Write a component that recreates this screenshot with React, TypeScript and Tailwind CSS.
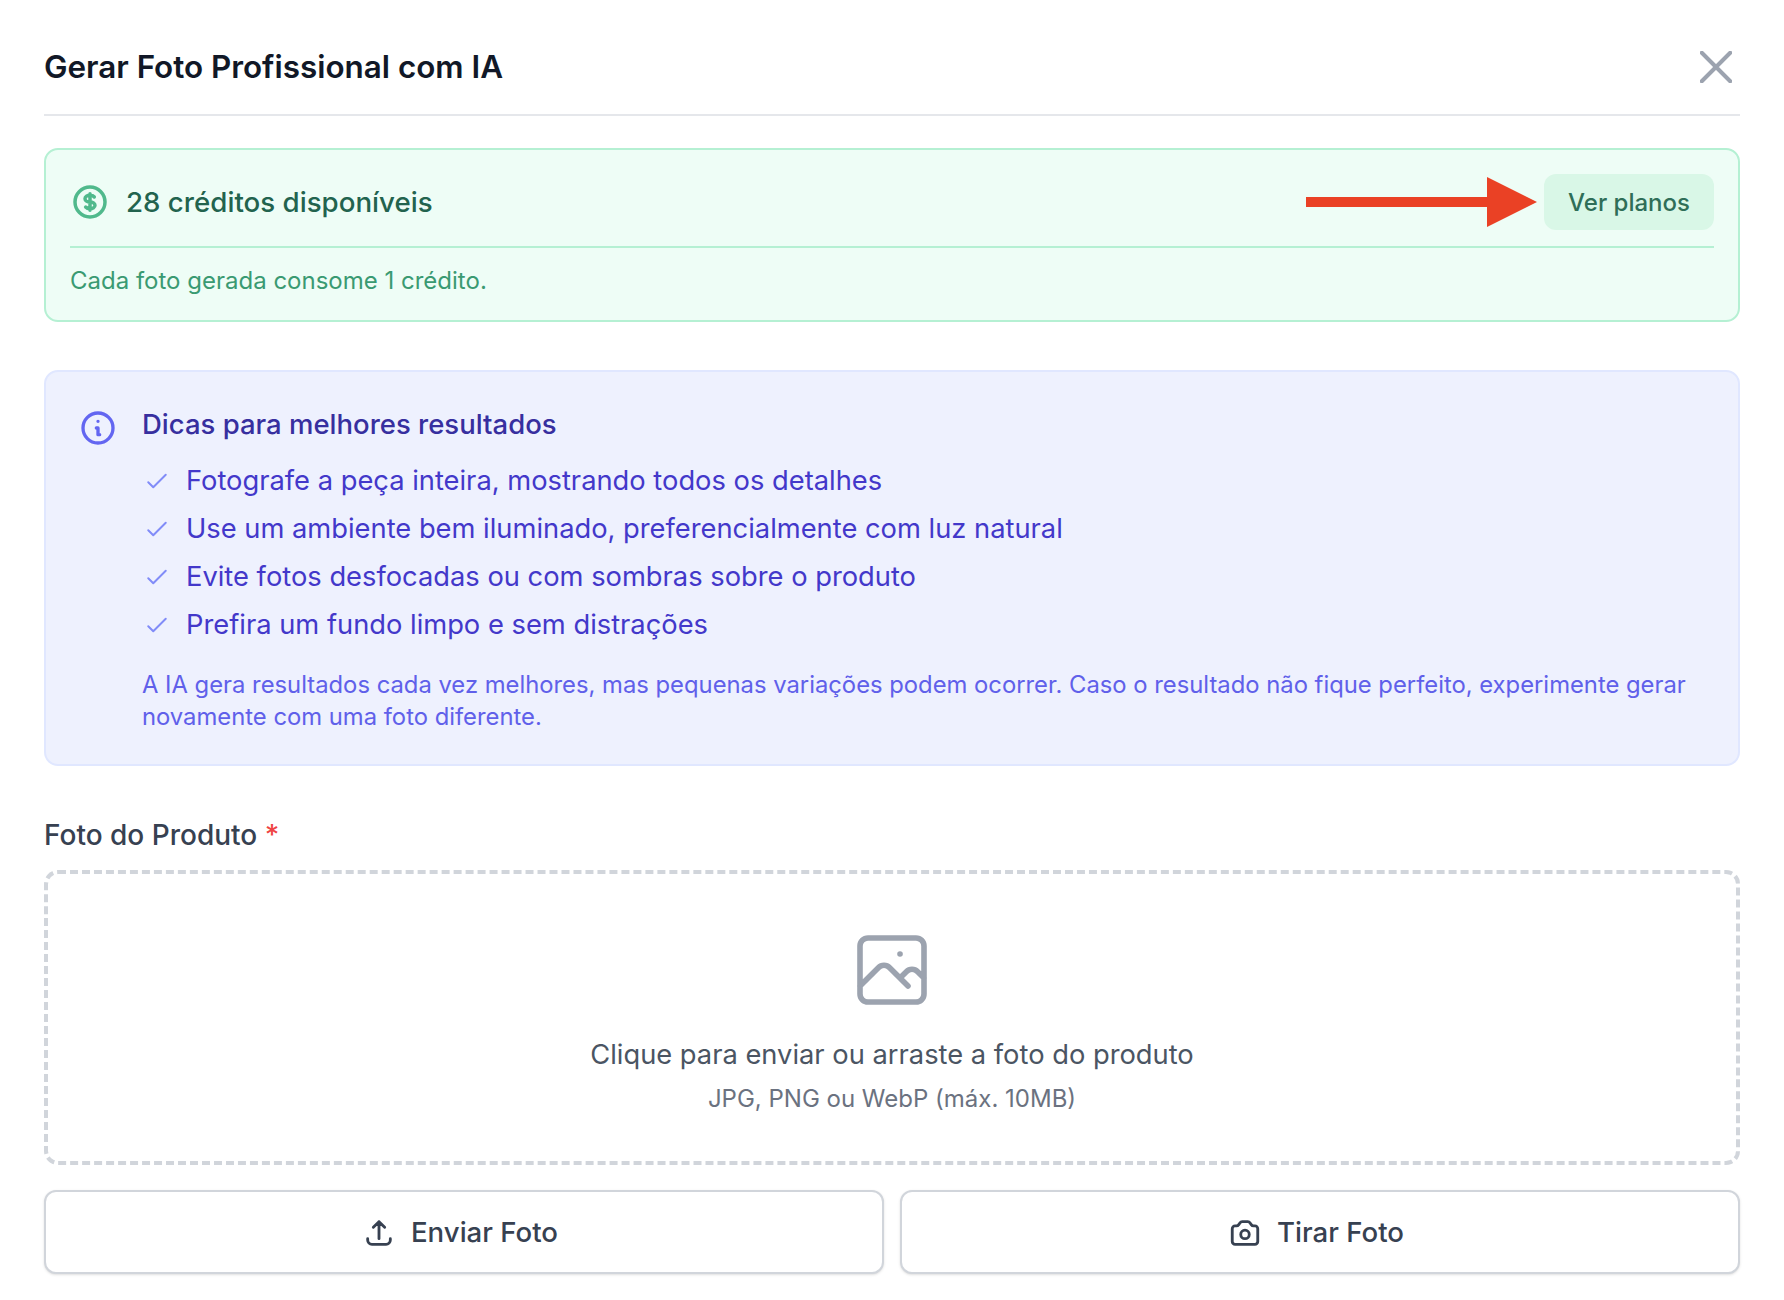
const tips = [
  'Fotografe a peça inteira, mostrando todos os detalhes',
  'Use um ambiente bem iluminado, preferencialmente com luz natural',
  'Evite fotos desfocadas ou com sombras sobre o produto',
  'Prefira um fundo limpo e sem distrações',
];

const font = { fontFamily: 'Inter, "Liberation Sans", sans-serif' };

const App = () => {
  return (
    <div style={font} className="w-[1784px] h-[1300px] bg-white px-[44px] overflow-hidden">
      <div className="h-[116px] border-b-2 border-[#e5e7eb] flex items-center justify-between pt-[19px]">
        <h2 className="text-[31.4px] leading-[40px] font-semibold text-[#111827]">Gerar Foto Profissional com IA</h2>
        <button className="mr-[8px] text-[#9ca3af]">
          <svg viewBox="5.25 5.25 13.5 13.5" width="32" height="32" fill="none" stroke="currentColor" strokeWidth="1.7" strokeLinecap="round" strokeLinejoin="round">
            <path d="M6 18L18 6M6 6l12 12" />
          </svg>
        </button>
      </div>

      <div className="mt-[32px] h-[174px] rounded-[14px] border-2 border-[#b5f0d3] bg-[#eefdf6] px-[24px]">
        <div className="h-[98px] border-b-2 border-[#b5f0d3] flex items-center justify-between pt-[8px]">
          <div className="flex items-center gap-[16px] pt-[1px]">
            <svg viewBox="0 0 24 24" width="40" height="40" fill="none" stroke="#50b98c" strokeWidth="2.1" strokeLinecap="round" strokeLinejoin="round">
              <path d="M12 8c-1.657 0-3 .895-3 2s1.343 2 3 2 3 .895 3 2-1.343 2-3 2m0-8c1.11 0 2.08.402 2.599 1M12 8V7m0 1v8m0 0v1m0-1c-1.11 0-2.08-.402-2.599-1M21 12a9 9 0 11-18 0 9 9 0 0118 0z" />
            </svg>
            <span className="text-[27.7px] font-medium text-[#22634e]">28 créditos disponíveis</span>
          </div>
          <div className="flex items-center">
            <svg viewBox="0 0 231 50" width="231" height="50" className="mr-[7px]">
              <rect x="0" y="20" width="182" height="10" fill="#ea4125" />
              <polygon points="181,0 231,25 181,50" fill="#ea4125" />
            </svg>
            <button className="w-[170px] h-[56px] rounded-[12px] bg-[#d9f7e7] text-[24px] font-medium text-[#2f6e58] pt-[1px]">Ver planos</button>
          </div>
        </div>
        <p className="mt-[16px] text-[24px] leading-[34px] text-[#3a9a72]">Cada foto gerada consome 1 crédito.</p>
      </div>

      <div className="mt-[48px] h-[396px] rounded-[14px] border-2 border-[#e0e7ff] bg-[#eef1fe] pl-[33px] pr-[24px] pt-[32px] flex items-start gap-[24px]">
        <svg viewBox="0 0 24 24" width="40" height="40" fill="none" stroke="#6366f1" strokeWidth="2" strokeLinecap="round" strokeLinejoin="round" className="shrink-0 mt-[4px] -ml-[1px]">
          <path d="M13 16h-1v-4h-1m1-4h.01M21 12a9 9 0 11-18 0 9 9 0 0118 0z" />
        </svg>
        <div className="flex-1 min-w-0">
          <h3 className="text-[27.5px] leading-[40px] font-medium text-[#372f9f]">Dicas para melhores resultados</h3>
          <ul className="mt-[17px] flex flex-col gap-[8px]">
            {tips.map((tip) => (
              <li key={tip} className="h-[40px] flex items-center gap-[14px] text-[27.3px] text-[#4338ca]">
                <svg viewBox="0 0 24 24" width="30" height="30" fill="none" stroke="#818cf8" strokeWidth="1.6" strokeLinecap="round" strokeLinejoin="round" className="shrink-0">
                  <path d="M5 13l4 4L19 7" />
                </svg>
                {tip}
              </li>
            ))}
          </ul>
          <p className="mt-[24px] text-[23.8px] leading-[32px] text-[#6060ea]">
            A IA gera resultados cada vez melhores, mas pequenas variações podem ocorrer. Caso o resultado não fique perfeito, experimente gerar novamente com uma foto diferente.
          </p>
        </div>
      </div>

      <label className="block mt-[49px] text-[28px] leading-[40px] font-medium text-[#374151]">
        Foto do Produto <span className="text-[#ef4444]">*</span>
      </label>
      <div className="mt-[15px] h-[295px] rounded-[14px] border-[4px] border-dashed border-[#d1d5db] flex flex-col items-center pt-[48px]">
        <svg viewBox="0 0 24 24" width="96" height="96" fill="none" stroke="#9ca3af" strokeWidth="1.4" strokeLinecap="round" strokeLinejoin="round">
          <path d="M4 16l4.586-4.586a2 2 0 012.828 0L16 16m-2-2l1.586-1.586a2 2 0 012.828 0L20 14m-6-6h.01M6 20h12a2 2 0 002-2V6a2 2 0 00-2-2H6a2 2 0 00-2 2v12a2 2 0 002 2z" />
        </svg>
        <p className="mt-[17px] text-[27.3px] leading-[40px] text-[#4b5563]">Clique para enviar ou arraste a foto do produto</p>
        <p className="mt-[8px] text-[24px] leading-[32px] text-[#6b7280]">JPG, PNG ou WebP (máx. 10MB)</p>
      </div>

      <div className="mt-[25px] grid grid-cols-2 gap-[16px]">
        <button className="h-[84px] rounded-[12px] border-2 border-[#d1d5db] bg-white shadow-sm flex items-center justify-center gap-[15px] pr-[8px] pt-[1px] text-[27.6px] font-medium text-[#374151]">
          <svg viewBox="0 0 24 24" width="34" height="34" fill="none" stroke="currentColor" strokeWidth="2" strokeLinecap="round" strokeLinejoin="round">
            <path d="M4 16v1a3 3 0 003 3h10a3 3 0 003-3v-1m-4-8l-4-4m0 0L8 8m4-4v12" />
          </svg>
          Enviar Foto
        </button>
        <button className="h-[84px] rounded-[12px] border-2 border-[#d1d5db] bg-white shadow-sm flex items-center justify-center gap-[15px] pr-[8px] pt-[1px] text-[27.6px] font-medium text-[#374151]">
          <svg viewBox="0 0 24 24" width="34" height="34" fill="none" stroke="currentColor" strokeWidth="2" strokeLinecap="round" strokeLinejoin="round">
            <path d="M3 9a2 2 0 012-2h.93a2 2 0 001.664-.89l.812-1.22A2 2 0 0110.07 4h3.86a2 2 0 011.664.89l.812 1.22A2 2 0 0018.07 7H19a2 2 0 012 2v9a2 2 0 01-2 2H5a2 2 0 01-2-2V9z" />
            <path d="M15 13a3 3 0 11-6 0 3 3 0 016 0z" />
          </svg>
          Tirar Foto
        </button>
      </div>
    </div>
  );
};

export default App;
